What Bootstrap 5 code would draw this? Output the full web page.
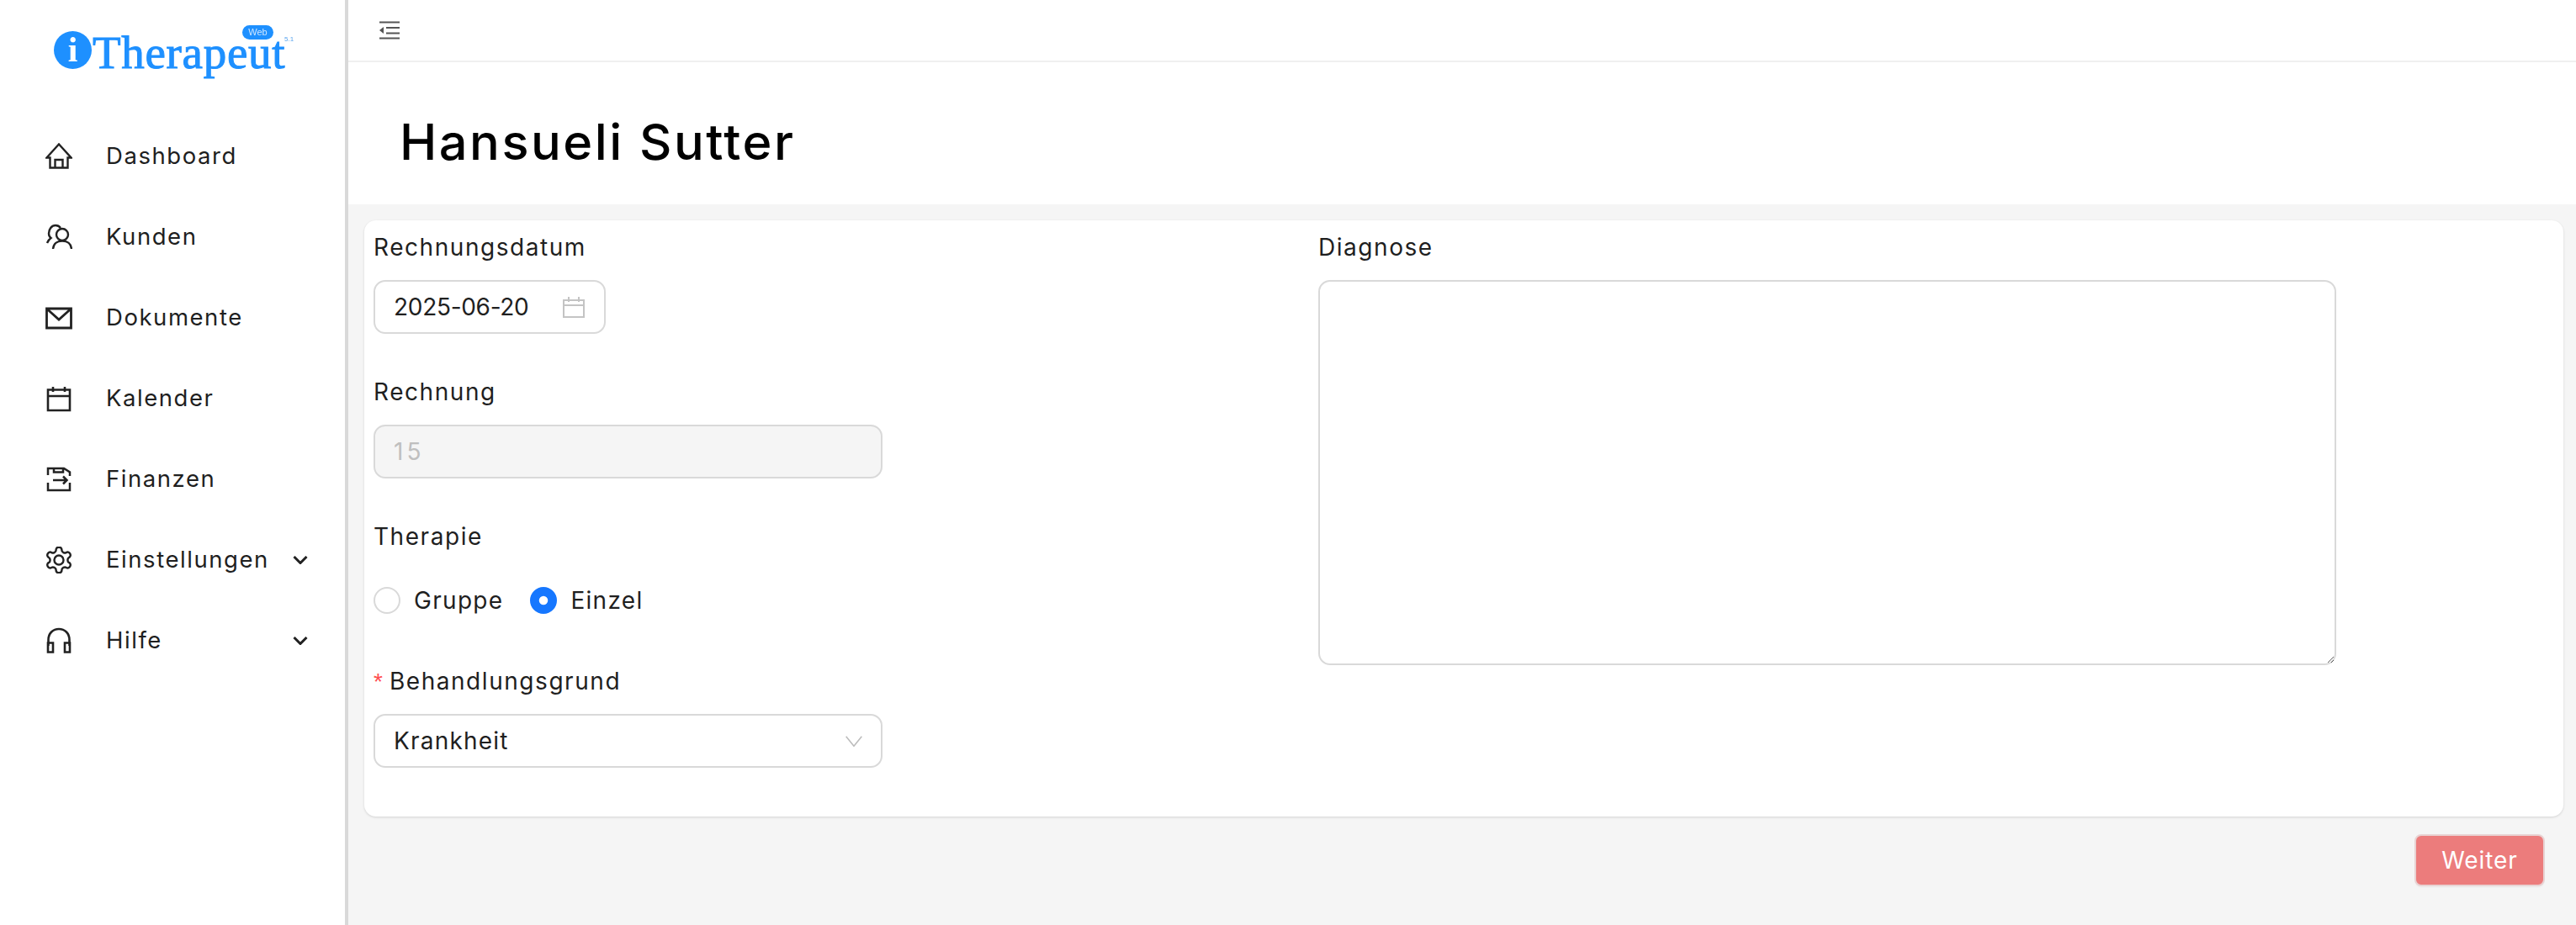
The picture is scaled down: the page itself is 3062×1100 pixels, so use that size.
<!doctype html>
<html lang="de">
<head>
<meta charset="utf-8">
<title>Hansueli Sutter</title>
<link href="https://cdn.jsdelivr.net/npm/bootstrap@5.3.0/dist/css/bootstrap.min.css" rel="stylesheet">
<style>
html,body{height:1100px;overflow:hidden}
body{font-family:Inter,"Open Sans",sans-serif;background:#f5f5f5;color:#1f1f1f;font-size:28px}
.shell{height:1100px}
.sidebar{width:414px;flex:none;background:#fff;border-right:4px solid #d9d9d9}
.logo-wrap{height:138px;position:relative}
.brand{position:absolute;left:64px;top:30px;width:290px;height:60px;color:#1e90ff;filter:blur(.5px)}
.brand-dot{position:absolute;left:0;top:7px;width:45px;height:45px;border-radius:50%;background:#1e90ff;color:#fff;font:bold 42px/45px "Liberation Serif",serif;text-align:center}
.brand-name{position:absolute;left:46px;top:18px;font:400 55px/30px "Liberation Serif",serif;-webkit-text-stroke:1px #1e90ff;letter-spacing:.7px}
.brand-web{position:absolute;left:224px;top:0;width:37px;height:17px;border-radius:9px;background:#1e90ff;color:#cfe6ff;font:11px/17px "Liberation Sans",sans-serif;text-align:center}
.brand-ver{position:absolute;left:274px;top:13px;font:8px/8px "Liberation Sans",sans-serif;color:#5aa5ee}
.side-link{height:96px;padding:0 44px 0 54px;color:#1f1f1f;font-size:27.5px;letter-spacing:1.55px}
.side-link:hover{color:#1f1f1f}
.side-ico{width:32px;height:32px;flex:none;margin-right:40px;fill:none;stroke:#222;stroke-width:2.4}
.side-chev{width:18px;height:10px;margin-left:auto;fill:none;stroke:#222;stroke-width:3}
.topbar{height:74px;background:#fff;border-bottom:2px solid #f0f0f0;padding-left:37px}
.pagehead{height:169px;background:#fff;padding-left:61px;padding-top:20px}
.pagehead h1{font-size:59.5px;font-weight:500;color:#000;margin:0;letter-spacing:2.5px}
.sheet{margin:19px 15px 0 19px;padding:11px 11px 10px;height:709px;background:#fff;border-radius:14px;box-shadow:0 1px 3px rgba(0,0,0,.14)}
.left-pane{width:1123px;flex:none}
.right-pane{width:1210px;flex:none}
.fld{height:172px}
.fld-label{display:block;height:44px;line-height:43px;margin-bottom:16px;font-size:28px;letter-spacing:1.55px;color:#1f1f1f}
.ctl.form-control,.ctl.form-select{height:64px;border:2px solid #d9d9d9;border-radius:14px;font-size:28px;padding:0 22px;color:#1f1f1f;box-shadow:none}
.ctl-wide{width:605px}
.ctl-date{width:276px}
.ctl.form-select{letter-spacing:1.2px}
.ctl.ctl-stamp{letter-spacing:-.3px}
.ctl.ctl-num{letter-spacing:4px}
.ctl.form-control:disabled{background:#f5f5f5;color:#bfbfbf;opacity:1}
.ctl.form-select{background-image:url("data:image/svg+xml,%3Csvg xmlns='http://www.w3.org/2000/svg' viewBox='0 0 20 13'%3E%3Cpath d='M.7.7 10 12.3 19.3.7' fill='none' stroke='%23bbb' stroke-width='1.5'/%3E%3C/svg%3E");background-size:20px 13px;background-position:right 22px center}
.ico-date{position:absolute;right:25px;top:20px;width:26px;height:25px;fill:none;stroke:#c4c4c4;stroke-width:2}
.radios{padding-top:10px;height:64px}
.radios .form-check-input{width:32px;height:32px;margin:0 16px 0 0;border:2px solid #d9d9d9;float:none;box-shadow:none}
.radios .form-check-input:checked{background-color:#1677ff;border-color:#1677ff;background-image:url("data:image/svg+xml,%3Csvg xmlns='http://www.w3.org/2000/svg' viewBox='-4 -4 8 8'%3E%3Ccircle r='1.5' fill='%23fff'/%3E%3C/svg%3E")}
.radios .form-check{padding:0;margin:0 32px 0 0;min-height:0}
.radios .form-check-label{font-size:28px;letter-spacing:1.3px}
.req{color:#ff4d4f;font-size:28px;margin-right:8px;font-family:"Liberation Sans",sans-serif;letter-spacing:0}
.note{height:458px;width:1210px;border:2px solid #d9d9d9;border-radius:14px;box-shadow:none;resize:both}
.go-btn{background:#ec7c7c;color:#fff;border:2px solid #e8d3d3;border-radius:8px;width:155px;height:62px;padding:0;font-size:28px;letter-spacing:.9px;box-shadow:0 2px 0 rgba(0,0,0,.02)}
.go-btn:hover{background:#ec7c7c;color:#fff}
.foot{padding:21px 37px 0 0}
</style>
</head>
<body>
<div class="d-flex shell">
  <aside class="sidebar">
    <div class="logo-wrap">
      <div class="brand">
        <span class="brand-dot">i</span>
        <span class="brand-name">Therapeut</span>
        <span class="brand-web">Web</span>
        <span class="brand-ver">5.1</span>
      </div>
    </div>
    <nav class="nav flex-column">
      <a class="nav-link d-flex align-items-center side-link" href="#">
        <svg class="side-ico" viewBox="0 0 32 32"><path d="M1.5 17.5 16 1.5l14.5 16H26.5V29.500H5.500V17.500Z M11.500 29.500V20H20.500V29.500"/></svg>Dashboard</a>
      <a class="nav-link d-flex align-items-center side-link" href="#">
        <svg class="side-ico" viewBox="0 0 32 32"><circle cx="20" cy="13" r="7"/><path d="M9 30c.5-6 5-9.500 11-9.500s10.500 3.500 11 9.500M2 23c1-2.500 2.500-4.500 4.500-6-1.500-1-2.500-3-2.500-5.500C4 6.500 7.500 2 12 2c2.500 0 4.500 1 6 3"/></svg>Kunden</a>
      <a class="nav-link d-flex align-items-center side-link" href="#">
        <svg class="side-ico" viewBox="0 0 32 32"><path d="M1.500 5H30.500V28H1.500Z M2 5.500 16 18 30 5.500" stroke-width="2.800"/></svg>Dokumente</a>
      <a class="nav-link d-flex align-items-center side-link" href="#">
        <svg class="side-ico" viewBox="0 0 32 32"><path d="M3 5.500H29V30H3Z M3 13H29M9 2V8M23 2V8" stroke-width="2.600"/></svg>Kalender</a>
      <a class="nav-link d-flex align-items-center side-link" href="#">
        <svg class="side-ico" viewBox="0 0 32 32"><path d="M3 11V3H22L29 7.500V12M10 3V7.500H21V3M3 20V29H29V20M9 17H25M21 12.500 25.500 17 21 21.500" stroke-width="2.500"/></svg>Finanzen</a>
      <a class="nav-link d-flex align-items-center side-link" href="#">
        <svg class="side-ico" viewBox="1.500 1.500 21 21" style="stroke-width:1.600"><path d="M12.220 2h-.44a2 2 0 0 0-2 2v.18a2 2 0 0 1-1 1.730l-.43.25a2 2 0 0 1-2 0l-.15-.08a2 2 0 0 0-2.730.73l-.22.38a2 2 0 0 0 .73 2.730l.15.1a2 2 0 0 1 1 1.720v.51a2 2 0 0 1-1 1.740l-.15.09a2 2 0 0 0-.73 2.730l.22.38a2 2 0 0 0 2.730.73l.15-.08a2 2 0 0 1 2 0l.43.25a2 2 0 0 1 1 1.730V20a2 2 0 0 0 2 2h.44a2 2 0 0 0 2-2v-.18a2 2 0 0 1 1-1.730l.43-.25a2 2 0 0 1 2 0l.15.08a2 2 0 0 0 2.730-.73l.22-.39a2 2 0 0 0-.73-2.730l-.15-.08a2 2 0 0 1-1-1.740v-.5a2 2 0 0 1 1-1.740l.15-.09a2 2 0 0 0 .73-2.730l-.22-.38a2 2 0 0 0-2.730-.73l-.15.08a2 2 0 0 1-2 0l-.43-.25a2 2 0 0 1-1-1.730V4a2 2 0 0 0-2-2z"/><circle cx="12" cy="12" r="3.600"/></svg>Einstellungen
        <svg class="side-chev" viewBox="0 0 18 10"><path d="M1.500 1 9 8.500 16.500 1"/></svg></a>
      <a class="nav-link d-flex align-items-center side-link" href="#">
        <svg class="side-ico" viewBox="0 0 32 32"><path d="M3.500 22V15C3.500 7 9 2 16 2s12.500 5 12.500 13v7M3 18.500H9V29.500H3ZM23 18.500H29V29.500H23Z" stroke-width="2.600"/></svg>Hilfe
        <svg class="side-chev" viewBox="0 0 18 10"><path d="M1.500 1 9 8.500 16.500 1"/></svg></a>
    </nav>
  </aside>
  <main class="flex-grow-1 d-flex flex-column">
    <div class="topbar d-flex align-items-center">
      <svg width="24" height="22" viewBox="0 0 24 22" fill="none" stroke="#555" stroke-width="2"><path d="M0 1.500H24M8 8H24M8 14.500H24M0 20.500H24"/><path d="M5 7V15L0 11Z" fill="#555" stroke="none"/></svg>
    </div>
    <header class="pagehead d-flex align-items-center">
      <h1>Hansueli Sutter</h1>
    </header>
    <section class="sheet d-flex">
      <div class="left-pane">
        <div class="fld">
          <label class="fld-label">Rechnungsdatum</label>
          <div class="position-relative ctl-date">
            <input class="form-control ctl ctl-stamp" type="text" value="2025-06-20">
            <svg class="ico-date" viewBox="0 0 26 25"><path d="M1 4H25V24H1ZM1 10H25M7 0V6M19 0V6"/></svg>
          </div>
        </div>
        <div class="fld">
          <label class="fld-label">Rechnung</label>
          <input class="form-control ctl ctl-wide ctl-num" type="text" value="15" disabled>
        </div>
        <div class="fld">
          <label class="fld-label">Therapie</label>
          <div class="radios d-flex align-items-center">
            <div class="form-check d-flex align-items-center">
              <input class="form-check-input" type="radio" name="th" id="r1">
              <label class="form-check-label" for="r1">Gruppe</label>
            </div>
            <div class="form-check d-flex align-items-center">
              <input class="form-check-input" type="radio" name="th" id="r2" checked>
              <label class="form-check-label" for="r2">Einzel</label>
            </div>
          </div>
        </div>
        <div class="fld">
          <label class="fld-label"><span class="req">*</span>Behandlungsgrund</label>
          <select class="form-select ctl ctl-wide"><option>Krankheit</option></select>
        </div>
      </div>
      <div class="right-pane">
        <label class="fld-label">Diagnose</label>
        <textarea class="form-control note"></textarea>
      </div>
    </section>
    <div class="foot d-flex justify-content-end">
      <button class="btn go-btn" type="button">Weiter</button>
    </div>
  </main>
</div>
</body>
</html>
